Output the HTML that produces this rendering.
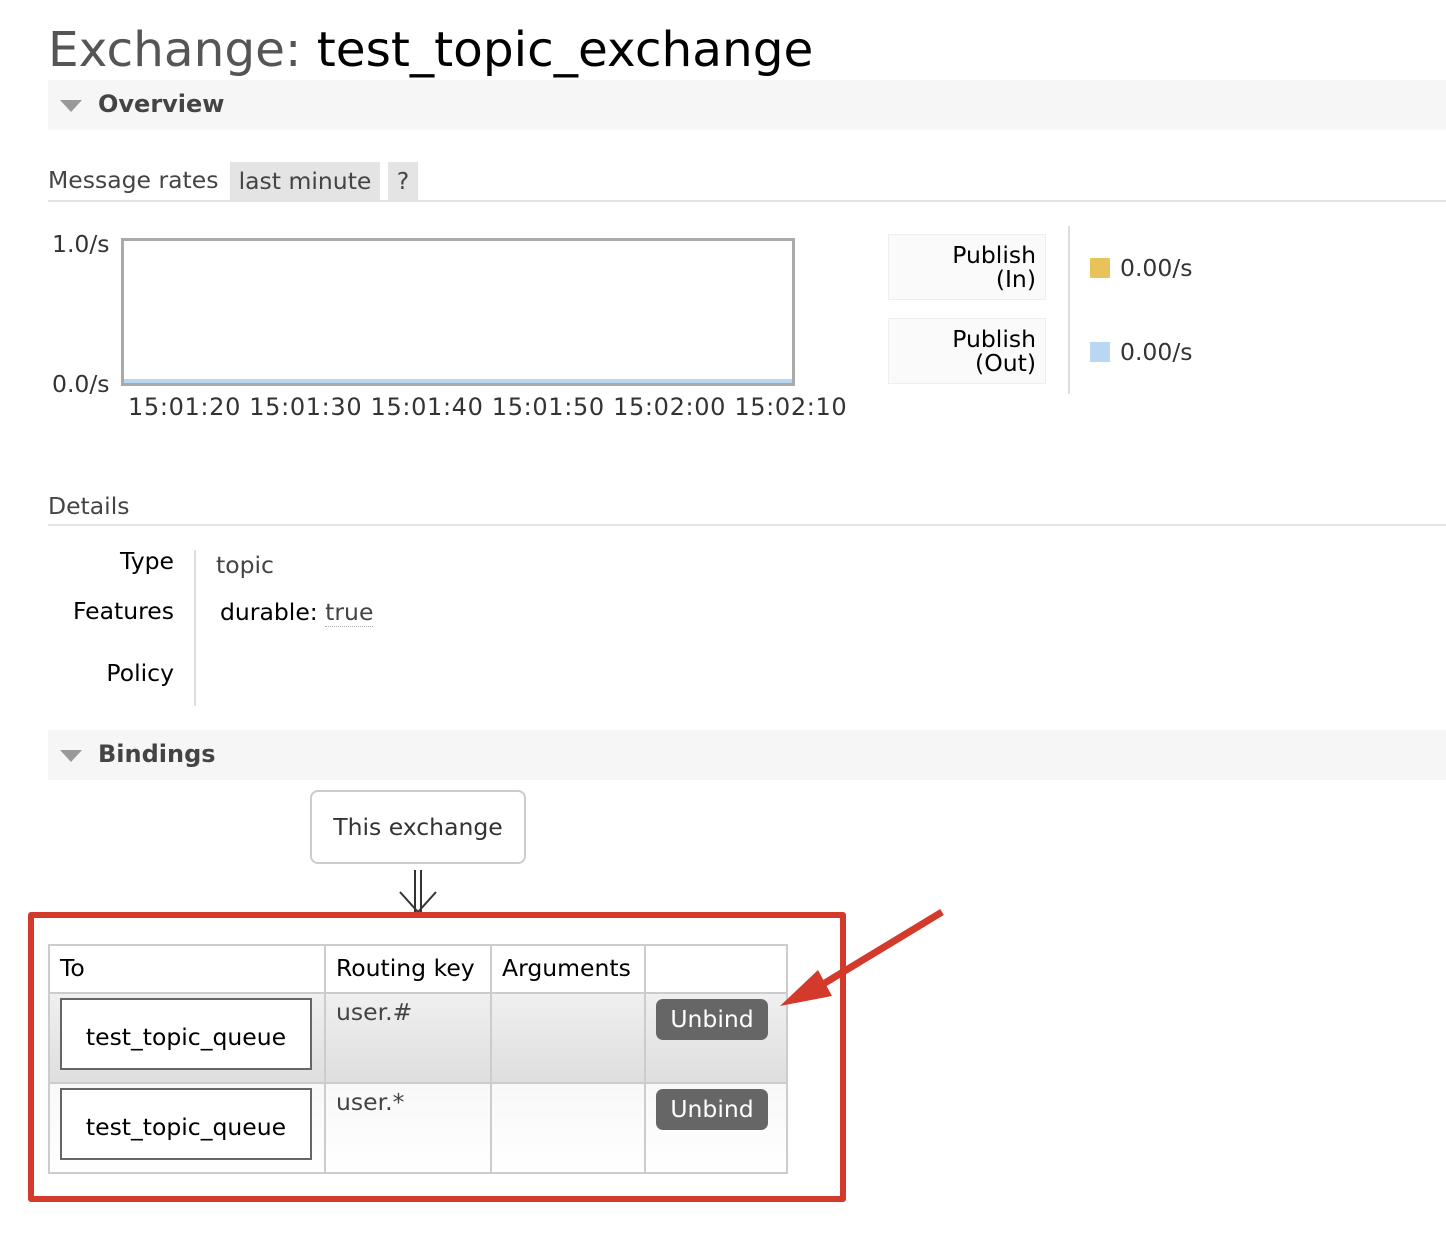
<!DOCTYPE html>
<html><head><meta charset="utf-8"><style>
html,body{margin:0;width:1446px;height:1236px;overflow:hidden}
body{background:#fff;font-family:"DejaVu Sans","Liberation Sans",sans-serif;position:relative;color:#000;font-size:23.5px}
.a{position:absolute;white-space:nowrap}
.bar{position:absolute;left:48px;width:1398px;height:50px;background:#f6f6f6}
.tri{position:absolute;left:12px;top:20px;width:0;height:0;border-left:11px solid transparent;border-right:11px solid transparent;border-top:12px solid #999}
.bar b{position:absolute;left:50px;top:10px;font-size:24px;color:#444}
.hr{position:absolute;left:48px;width:1398px;height:2px;background:#e4e4e4}
.tb{border-collapse:collapse;position:absolute;left:48px;top:944px;table-layout:fixed}
.tb td{border:2px solid #ccc;vertical-align:top;font-size:23.5px;padding:0;overflow:hidden;white-space:nowrap}
.q{margin:4px 10px 10px 10px;border:2px solid #666;background:#fff;height:72px;line-height:74px;text-align:center;box-sizing:border-box;width:252px}
.btn{background:#666;color:#fff;border-radius:7px;width:112px;height:41px;line-height:41px;text-align:center;margin:5px 0 0 10px;font-size:23.5px}
</style></head><body>
<div class="a" style="left:48px;top:22px;font-size:48.5px;color:#555">Exchange: <span style="color:#000">test_topic_exchange</span></div>
<div class="bar" style="top:80px"><div class="tri"></div><b>Overview</b></div>
<div class="a" style="left:48px;top:166px;color:#444">Message rates</div>
<div class="a" style="left:230px;top:162px;width:150px;height:38px;background:#e4e4e4;color:#444;line-height:38px;text-align:center">last minute</div>
<div class="a" style="left:388px;top:162px;width:30px;height:38px;background:#e4e4e4;color:#444;line-height:38px;text-align:center">?</div>
<div class="hr" style="top:200px"></div>
<div class="a" style="left:52px;top:230px;color:#333">1.0/s</div>
<div class="a" style="left:52px;top:370px;color:#333">0.0/s</div>
<div class="a" style="left:121px;top:238px;width:668px;height:142px;border:3px solid #aaa;background:#fff"></div>
<div class="a" style="left:124px;top:379px;width:668px;height:4px;background:#b9d7f2"></div>
<div class="a" style="left:128px;top:393px;font-size:24px;color:#333;letter-spacing:0.65px">15:01:20 15:01:30 15:01:40 15:01:50 15:02:00 15:02:10</div>
<div class="a" style="left:888px;top:234px;width:158px;height:66px;background:#fafafa;border:1px solid #eee;text-align:right;line-height:24px;box-sizing:border-box;padding:8px 9px 0 0">Publish<br>(In)</div>
<div class="a" style="left:888px;top:318px;width:158px;height:66px;background:#fafafa;border:1px solid #eee;text-align:right;line-height:24px;box-sizing:border-box;padding:8px 9px 0 0">Publish<br>(Out)</div>
<div class="a" style="left:1068px;top:226px;width:2px;height:168px;background:#ddd"></div>
<div class="a" style="left:1090px;top:258px;width:20px;height:20px;background:#e8c35a"></div>
<div class="a" style="left:1120px;top:254px;color:#333">0.00/s</div>
<div class="a" style="left:1090px;top:342px;width:20px;height:20px;background:#b9d7f2"></div>
<div class="a" style="left:1120px;top:338px;color:#333">0.00/s</div>
<div class="a" style="left:48px;top:492px;color:#444">Details</div>
<div class="hr" style="top:524px"></div>
<div class="a" style="left:0;width:174px;top:547px;text-align:right">Type</div>
<div class="a" style="left:0;width:174px;top:597px;text-align:right">Features</div>
<div class="a" style="left:0;width:174px;top:659px;text-align:right">Policy</div>
<div class="a" style="left:194px;top:550px;width:2px;height:156px;background:#ddd"></div>
<div class="a" style="left:216px;top:551px;color:#444">topic</div>
<div class="a" style="left:220px;top:598px">durable: <span style="color:#444;border-bottom:1px dotted #aaa">true</span></div>
<div class="bar" style="top:730px"><div class="tri"></div><b>Bindings</b></div>
<div class="a" style="left:310px;top:790px;width:216px;height:74px;border:2px solid #ccc;border-radius:8px;box-sizing:border-box;color:#333;text-align:center;line-height:70px">This exchange</div>
<svg class="a" style="left:396px;top:868px" width="44" height="46"><path d="M19 2V44M25 2V44M4 24L22 44L40 24" stroke="#333" stroke-width="2" fill="none"/></svg>
<table class="tb">
<colgroup><col style="width:276px"><col style="width:166px"><col style="width:154px"><col style="width:142px"></colgroup>
<tr style="height:48px"><td style="padding:8px 0 0 10px">To</td><td style="padding:8px 0 0 10px">Routing key</td><td style="padding:8px 0 0 10px">Arguments</td><td></td></tr>
<tr style="height:90px;background:linear-gradient(#f0f0f0,#dedede)"><td><div class="q">test_topic_queue</div></td><td style="padding:4px 0 0 10px;color:#444">user.#</td><td></td><td><div class="btn">Unbind</div></td></tr>
<tr style="height:90px;background:linear-gradient(#f8f8f8,#fff)"><td><div class="q">test_topic_queue</div></td><td style="padding:4px 0 0 10px;color:#444">user.*</td><td></td><td><div class="btn">Unbind</div></td></tr>
</table>
<div class="a" style="left:28px;top:912px;width:818px;height:290px;border:6px solid #d33a2c;border-radius:3px;box-sizing:border-box"></div>
<svg class="a" style="left:770px;top:900px" width="190" height="120"><line x1="172" y1="12" x2="40" y2="92" stroke="#d33a2c" stroke-width="7"/><polygon points="10,106 48,70 62,96" fill="#d33a2c"/></svg>
</body></html>
